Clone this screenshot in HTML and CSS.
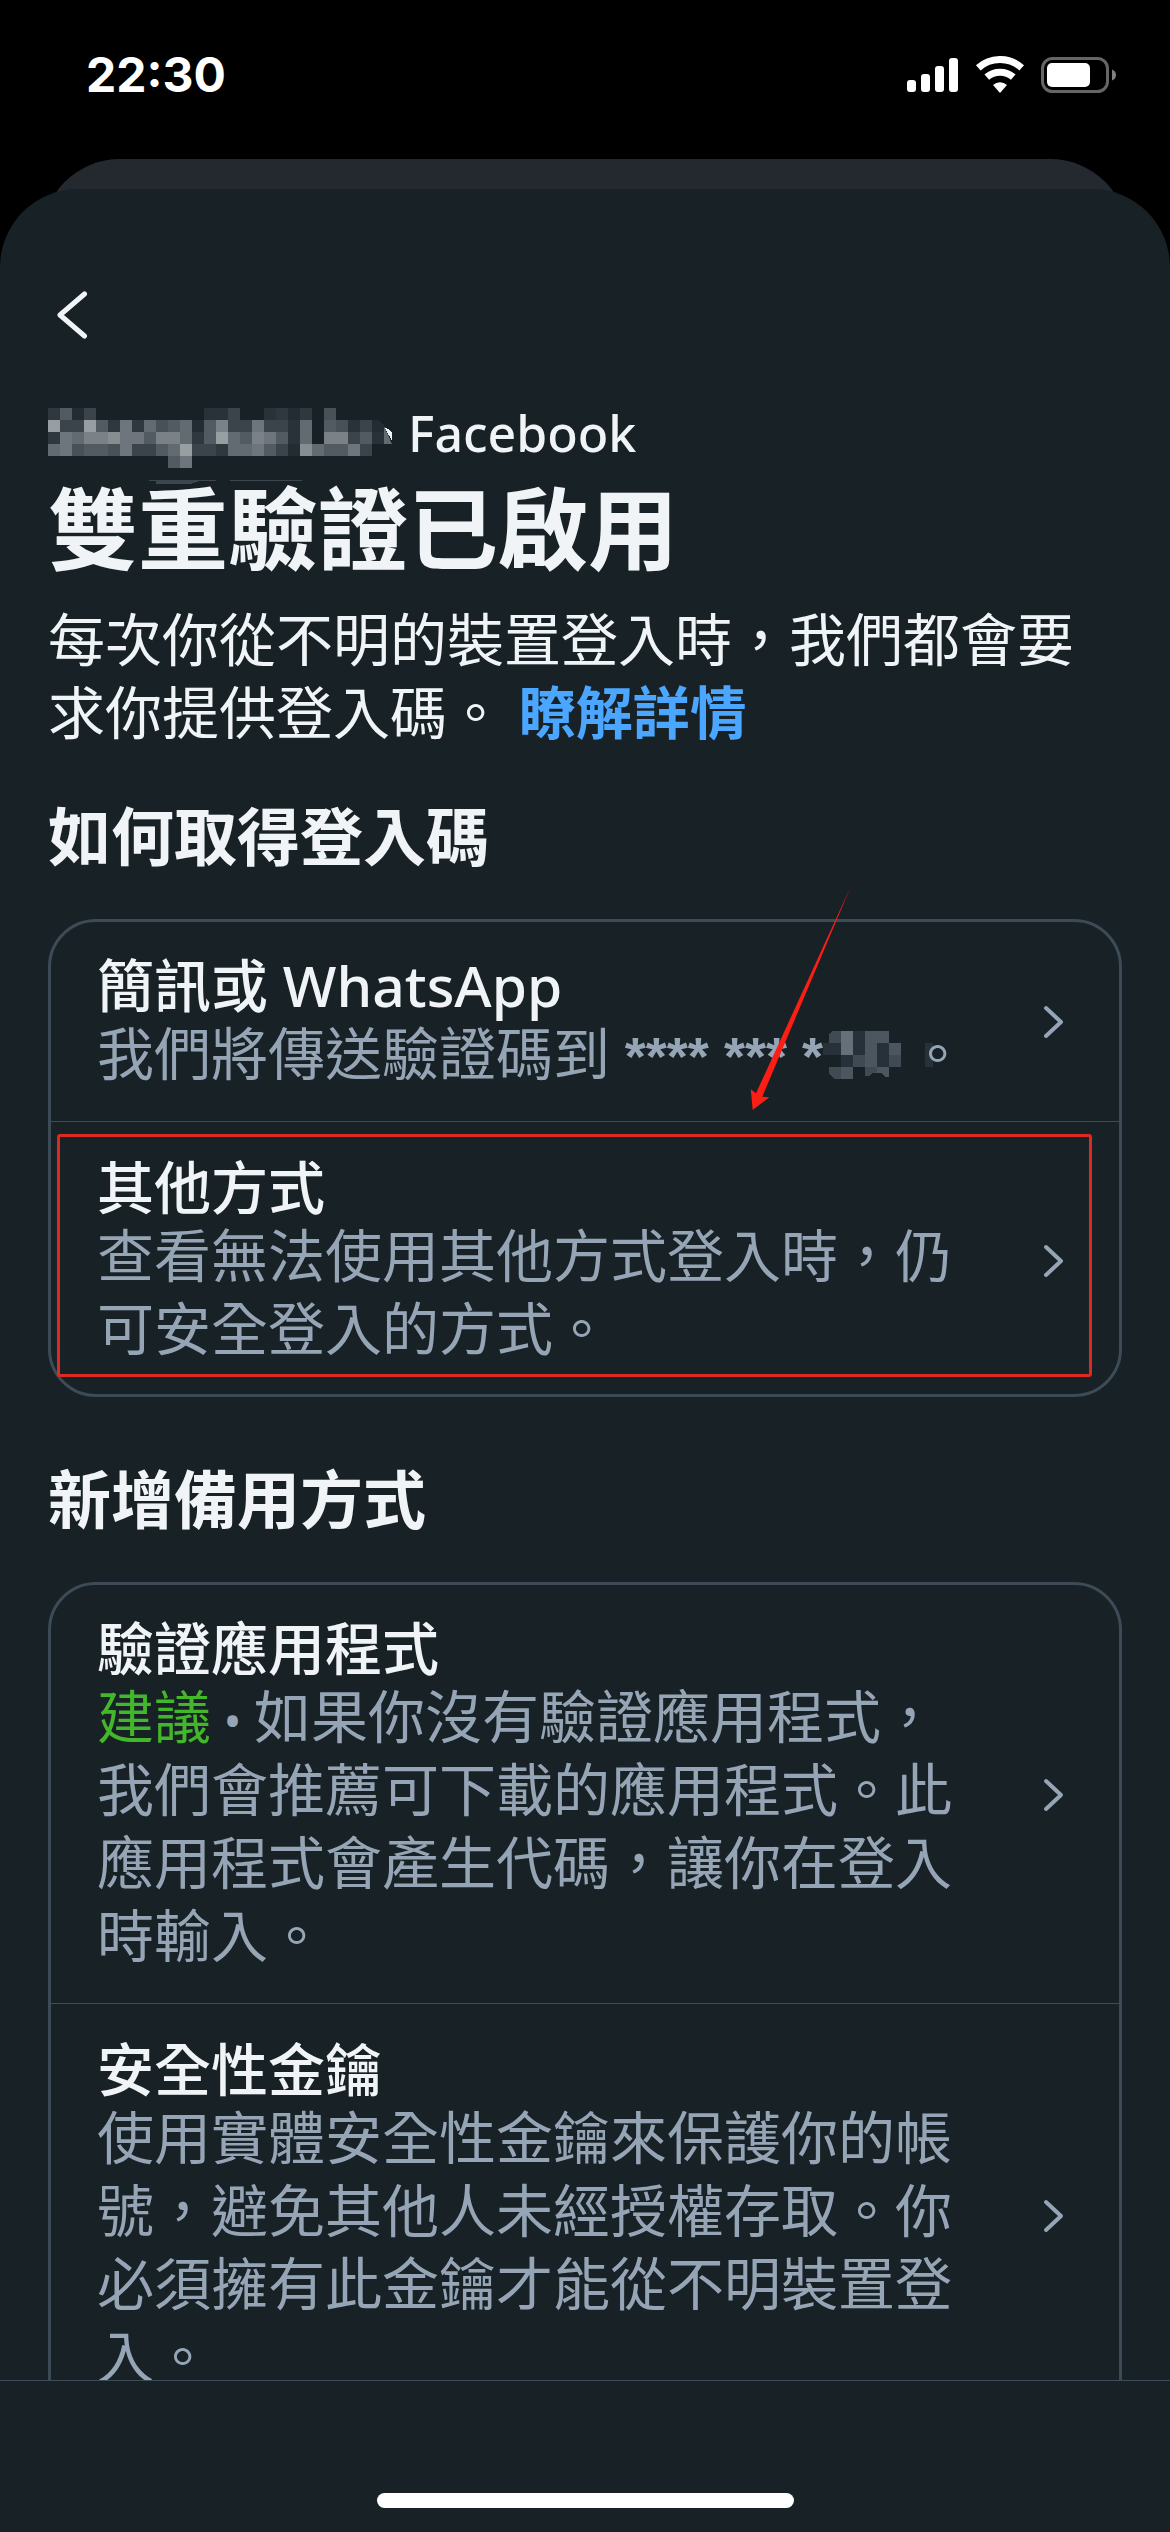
FILE: index.html
```
<!DOCTYPE html>
<html lang="zh-Hant">
<head>
<meta charset="utf-8">
<meta name="viewport" content="width=device-width, initial-scale=1">
<title>雙重驗證</title>
<link rel="stylesheet" href="styles.css">
</head>
<body>
<div class="screen">
  <header class="status">
    <time class="status-time">22:30</time>
    <div class="status-icons">
      <svg width="52" height="36" viewBox="0 0 52 36" fill="#fff" aria-hidden="true">
        <rect x="0" y="23" width="9" height="12" rx="3"/><rect x="14" y="17" width="9" height="18" rx="3"/><rect x="28" y="9" width="9" height="26" rx="3"/><rect x="42" y="1" width="9" height="34" rx="3"/>
      </svg>
      <svg width="50" height="38" viewBox="0 0 50 38" fill="none" stroke="#fff" stroke-width="7" aria-hidden="true">
        <path d="M3.300 11.800A32.500 32.500 0 0 1 46.700 11.800"/><path d="M11.800 21.200A19.800 19.800 0 0 1 38.200 21.200"/><path d="M25 37L18 29A10.300 10.300 0 0 1 32 29Z" fill="#fff" stroke="none"/>
      </svg>
      <svg width="76" height="36" viewBox="0 0 76 36" aria-hidden="true">
        <rect x="1.500" y="1.500" width="65" height="33" rx="10" fill="none" stroke="#666" stroke-width="3"/><rect x="6" y="6" width="43" height="24" rx="5" fill="#fff"/><path d="M71 12.500Q75 14 75 18T71 23.500Z" fill="#808080"/>
      </svg>
    </div>
  </header>
  <div class="under-sheet"></div>
  <main class="sheet">
    <div class="content">
      <button class="back" type="button" aria-label="返回">
        <svg width="48" height="48" viewBox="0 0 48 48" fill="none" stroke="#f1f4f7" stroke-width="5" stroke-linecap="round" stroke-linejoin="round" aria-hidden="true"><path d="M36.500 3L12 24L36.500 45"/></svg>
      </button>
      <p class="account">
        <svg class="masked-name" width="360" height="60" viewBox="0 -5 360 60" shape-rendering="crispEdges" aria-hidden="true">
          <g>
            <path fill="#2e383e" d="M0 0h12v12H0zM252 0h12v12h-12zM228 0h12v12h-12zM84 12h12v12H84zM60 12h12v12H60zM0 24h12v12H0zM144 24h12v12h-12zM168 36h12v12h-12z"/>
            <path fill="#222c32" d="M24 0h12v12H24zM240 0h12v12h-12zM144 12h12v12h-12zM324 12h6l6 6v6h-12zM240 36h12v12h-12z"/>
            <path fill="#283238" d="M156 0h24v12h-24zM216 0h12v12h-12zM240 12h12v24h-12zM300 12h12v12h-12zM324 24h12v12h-12z"/>
            <path fill="#3b444b" d="M36 0h12v12H36zM180 0h12v12h-12zM12 12h24v12H12zM180 12h24v12h-24zM216 12h24v12h-24zM312 12h12v12h-12zM300 24h12v12h-12zM84 36h24v12H84zM144 36h24v12h-24zM228 36h12v12h-12zM312 36h12v12h-12z"/>
            <path fill="#485058" d="M276 0h12v12h-12zM108 12h12v12h-12zM288 12h12v12h-12zM24 36h12v12H24zM60 36h12v12H60z"/>
            <path fill="#535b62" d="M12 0h12v12H12zM48 12h12v12H48zM120 12h12v12h-12zM156 12h12v24h-12zM276 12h12v12h-12zM96 24h12v12H96zM192 24h12v12h-12zM228 24h12v12h-12zM312 24h12v12h-12zM36 36h24v12H36zM108 36h12v12h-12zM216 36h12v12h-12zM276 36h24v12h-24zM120 48h12v12h-12z"/>
            <path fill="#636b72" d="M96 12h12v12H96zM132 12h12v24h-12zM252 12h12v24h-12zM24 24h12v12H24zM180 24h12v12h-12zM336 18l8 18h-8zM0 36h12v12H0zM120 36h12v12h-12zM180 36h24v12h-24zM264 36h12v12h-12z"/>
            <path fill="#6e757c" d="M72 12h12v36H72zM204 12h12v12h-12zM12 24h12v24H12zM84 24h12v12H84zM216 24h12v12h-12zM204 36h12v12h-12zM300 36h12v12h-12zM132 48h12v12h-12z"/>
            <path fill="#7a8287" d="M108 24h24v12h-24zM204 24h12v12h-12zM276 24h24v12h-24zM168 12h12v12h-12zM36 24h24v12H36z"/>
            <path fill="#878e91" d="M60 24h12v12H60zM252 36h12v12h-12z"/>
            <path fill="#989fa2" d="M0 12h12v12H0zM36 12h12v12H36zM168 24h12v12h-12zM132 36h12v12h-12z"/>
            <path fill="#f1f4f7" d="M337 20q9 1 7 13z"/>
            <path fill="#3d464c" d="M101 72h67v1h-17l-9 3h-34v-3h-7zM182 72h72v1h-72z"/>
          </g>
        </svg>
        <span>Facebook</span>
      </p>
      <h1 class="title">雙重驗證已啟用</h1>
      <p class="intro">每次你從不明的裝置登入時，我們都會要求你提供登入碼。 <a class="more" href="#">瞭解詳情</a></p>

      <section class="section">
        <h2 class="heading">如何取得登入碼</h2>
        <ul class="card">
          <li class="item">
            <button class="row" type="button">
              <span class="text">
                <span class="name">簡訊或 WhatsApp</span>
                <span class="desc">我們將傳送驗證碼到 <span class="stars">**** *** *</span><svg class="masked-digits" width="86" height="48" viewBox="-6 0 86 48" shape-rendering="crispEdges" aria-hidden="true">
                  <path fill="#26313a" d="M-6 12H12v12H-6zM24 0h12v24H24zM12 24h12v12H12zM48 12h12v24H48zM96 12h8v24h-8z"/>
                  <path fill="#3f4a53" d="M0 3l4-3h8v12H0zM24 24h12v12H24zM60 24h12v12H60zM0 36h12v12H5L0 42zM36 36h12v6h-4l-4 3h-4z"/>
                  <path fill="#4b565f" d="M36 0h24v12H36zM36 12h12v24H36zM60 12h12v12H60zM12 36h12v12H12zM48 36h12v10h-4l-4-4h-4z"/>
                  <path fill="#65707a" d="M12 0h12v24H12z"/>
                </svg>。</span>
              </span>
              <svg class="chevron" width="24" height="36" viewBox="0 0 24 36" aria-hidden="true"><path d="M4 4L19 18L4 32"/></svg>
            </button>
            <svg class="arrow" width="110" height="228" viewBox="0 0 110 228" aria-hidden="true"><path fill="#fb1e14" d="M106 2L17.300 212.700L24.300 213.300L7.700 226L5.700 205.300L11 209.300Z"/></svg>
          </li>
          <li class="item">
            <button class="row" type="button">
              <span class="text">
                <span class="name">其他方式</span>
                <span class="desc">查看無法使用其他方式登入時，仍可安全登入的方式。</span>
              </span>
              <svg class="chevron" width="24" height="36" viewBox="0 0 24 36" aria-hidden="true"><path d="M4 4L19 18L4 32"/></svg>
            </button>
            <div class="highlight"></div>
          </li>
        </ul>
      </section>

      <section class="section">
        <h2 class="heading">新增備用方式</h2>
        <ul class="card">
          <li class="item">
            <button class="row" type="button">
              <span class="text">
                <span class="name">驗證應用程式</span>
                <span class="desc"><span class="recommended">建議</span><span class="dot"> • </span>如果你沒有驗證應用程式，我們會推薦可下載的應用程式。此應用程式會產生代碼，讓你在登入時輸入。</span>
              </span>
              <svg class="chevron" width="24" height="36" viewBox="0 0 24 36" aria-hidden="true"><path d="M4 4L19 18L4 32"/></svg>
            </button>
          </li>
          <li class="item">
            <button class="row" type="button">
              <span class="text">
                <span class="name">安全性金鑰</span>
                <span class="desc">使用實體安全性金鑰來保護你的帳號，避免其他人未經授權存取。你必須擁有此金鑰才能從不明裝置登入。</span>
              </span>
              <svg class="chevron" width="24" height="36" viewBox="0 0 24 36" aria-hidden="true"><path d="M4 4L19 18L4 32"/></svg>
            </button>
          </li>
        </ul>
      </section>
    </div>
    <footer class="bottom"><div class="home-indicator"></div></footer>
  </main>
</div>
</body>
</html>
```
FILE: styles.css
```
* {
  box-sizing: border-box;
}

body {
  margin: 0;
  background: #000;
  color: #f1f4f7;
  font-family: "Noto Sans", "Noto Sans CJK TC", sans-serif;
  font-size: 57px;
  line-height: 73px;
}

svg {
  display: block;
  flex: none;
}

.screen {
  display: flex;
  flex-direction: column;
  height: 100vh;
}

/* Status bar */
.status {
  display: flex;
  flex: none;
  justify-content: space-between;
  align-items: center;
  padding: 50px 53px 59px 86px;
}

.status-time {
  color: #fff;
  font: 700 48px/50px Inter, sans-serif;
}

.status-icons {
  display: flex;
  align-items: center;
  gap: 16px;
}

/* Stacked sheets */
.under-sheet {
  flex: none;
  height: 108px;
  margin: 0 42px;
  border-radius: 78px 78px 0 0;
  background: #23292f;
}

.sheet {
  display: flex;
  flex: 1;
  flex-direction: column;
  min-height: 0;
  margin-top: -78px;
  border-radius: 78px 78px 0 0;
  background: #172126;
  overflow: hidden;
}

.content {
  flex: 1;
  min-height: 0;
  padding: 102px 48px 48px;
  overflow-y: auto;
  scrollbar-width: none;
}

.back {
  display: block;
  padding: 0;
  border: 0;
  background: none;
}

.account {
  display: flex;
  margin: 64px 0 15px;
  font-size: 50px;
  font-weight: 500;
  line-height: 60px;
}

.masked-name {
  overflow: visible;
}

.title {
  margin: 0;
  font-size: 90px;
  line-height: 100px;
}

.intro {
  margin: 25px 0 49px;
}

.more {
  color: #4ba6ff;
  font-weight: 700;
  text-decoration: none;
}

.section + .section {
  margin-top: 64px;
}

.heading {
  margin: 0 0 45px;
  font-size: 63px;
  font-weight: 600;
  line-height: 76px;
}

/* Option cards */
.card {
  margin: 0;
  padding: 0;
  border: 3px solid #3d4b57;
  border-radius: 48px;
  list-style: none;
}

.item {
  position: relative;
}

.item + .item {
  border-top: 1px solid #3d4b57;
}

.row {
  display: flex;
  align-items: center;
  gap: 73px;
  width: 100%;
  padding: 32px 53px 31px 46px;
  border: 0;
  background: none;
  color: inherit;
  font: inherit;
  text-align: left;
}

.item + .item .row {
  padding-top: 34px;
  padding-bottom: 29px;
}

.text {
  flex: 1;
}

.name {
  display: block;
  font-weight: 500;
  line-height: 63px;
}

.desc {
  display: block;
  color: #96a5b5;
}

.stars {
  font-family: "Liberation Sans", sans-serif;
  font-size: 54px;
  font-weight: 700;
  line-height: 54px;
}

.masked-digits {
  display: inline-block;
  overflow: visible;
  vertical-align: -4px;
}

.recommended {
  color: #42b72a;
}

.dot {
  font-size: 48px;
  line-height: 48px;
}

.chevron {
  fill: none;
  stroke: #96a5b5;
  stroke-width: 4;
  stroke-linecap: round;
  stroke-linejoin: round;
}

/* Annotations over the card */
.arrow {
  position: absolute;
  top: -38px;
  left: 694px;
  z-index: 1;
  pointer-events: none;
}

.highlight {
  position: absolute;
  inset: 12px 27px 17px 6px;
  border: 3px solid #dc2a20;
  border-radius: 3px;
  pointer-events: none;
}

/* Bottom bar */
.bottom {
  display: flex;
  flex: none;
  justify-content: center;
  padding: 112px 0 24px;
  border-top: 1px solid #3d4b57;
}

.home-indicator {
  width: 417px;
  height: 15px;
  border-radius: 8px;
  background: #fff;
}
```
